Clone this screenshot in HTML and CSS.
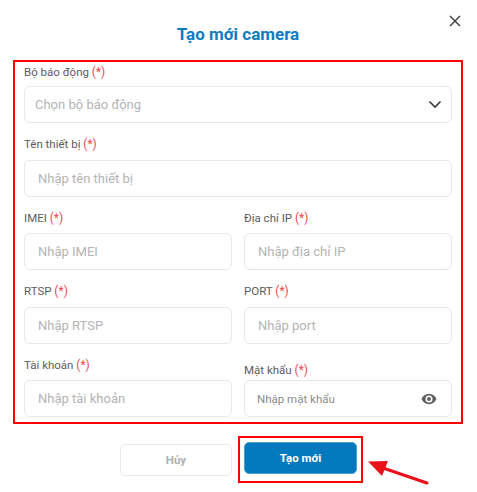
FILE: index.html
```html
<!DOCTYPE html>
<html lang="vi">
<head>
<meta charset="utf-8">
<title>Tạo mới camera</title>
<link rel="stylesheet" href="styles.css">
</head>
<body>
<div class="modal">
  <header class="modal-head">
    <h1 class="modal-title">Tạo mới camera</h1>
    <button class="close-btn" type="button" aria-label="Đóng">
      <svg width="12" height="12" viewBox="0 0 12 12"><path d="M1 1l10 10M11 1L1 11" fill="none" stroke="#444" stroke-width="1.5"/></svg>
    </button>
  </header>

  <form class="form-box">
    <div class="field field-first">
      <label class="label">Bộ báo động <span class="req">(*)</span></label>
      <div class="control control-select">
        <span class="ph ph-select">Chọn bộ báo động</span>
        <svg width="14" height="9" viewBox="0 0 14 9"><path d="M1.5 1.5L7 7l5.500-5.500" fill="none" stroke="#3a3a3a" stroke-width="1.700"/></svg>
      </div>
    </div>
    <div class="field">
      <label class="label">Tên thiết bị <span class="req">(*)</span></label>
      <div class="control"><span class="ph">Nhập tên thiết bị</span></div>
    </div>
    <div class="row">
      <div class="field">
        <label class="label">IMEI <span class="req">(*)</span></label>
        <div class="control"><span class="ph">Nhập IMEI</span></div>
      </div>
      <div class="field">
        <label class="label">Địa chỉ IP <span class="req">(*)</span></label>
        <div class="control"><span class="ph">Nhập địa chỉ IP</span></div>
      </div>
    </div>
    <div class="row">
      <div class="field">
        <label class="label">RTSP <span class="req">(*)</span></label>
        <div class="control"><span class="ph">Nhập RTSP</span></div>
      </div>
      <div class="field">
        <label class="label">PORT <span class="req">(*)</span></label>
        <div class="control"><span class="ph">Nhập port</span></div>
      </div>
    </div>
    <div class="row">
      <div class="field">
        <label class="label">Tài khoản <span class="req">(*)</span></label>
        <div class="control"><span class="ph">Nhập tài khoản</span></div>
      </div>
      <div class="field field-low">
        <label class="label">Mật khẩu <span class="req">(*)</span></label>
        <div class="control control-pass">
          <span class="ph ph-small">Nhập mật khẩu</span>
          <svg width="16" height="12" viewBox="0 0 16 12"><path fill-rule="evenodd" fill="#616161" d="M8 .8C4.600.8 1.700 2.900.5 6c1.200 3.100 4.100 5.200 7.500 5.200s6.300-2.100 7.500-5.200C14.300 2.900 11.400.8 8 .8zm0 8.700A3.500 3.500 0 1 1 8 2.500a3.500 3.500 0 0 1 0 7zM8 4a2 2 0 1 0 0 4 2 2 0 0 0 0-4z"/></svg>
        </div>
      </div>
    </div>
  </form>

  <div class="actions">
    <button class="btn btn-cancel" type="button">Hủy</button>
    <div class="btn-mark">
      <button class="btn btn-primary" type="button">Tạo mới</button>
    </div>
  </div>
</div>

<!-- mui ten chu thich -->
<svg class="arrow" width="66" height="28" viewBox="0 0 66 28">
  <path d="M61 24L14 8" fill="none" stroke="#e8101a" stroke-width="3" stroke-linecap="round"/>
  <path d="M2 2.500L22 2l-6 15z" fill="#e8101a"/>
</svg>
</body>
</html>
```

FILE: styles.css
```css
* {
  box-sizing: border-box;
}
body {
  margin: 0;
  background: #fff;
  font-family: Roboto, "Liberation Sans", sans-serif;
  color: #555;
}
.modal {
  width: 477px;
  height: 492px;
  padding: 0 14px 0 13px;
}

.modal-head {
  position: relative;
  height: 60px;
  padding-top: 24px;
}
.modal-title {
  margin: 0;
  font-size: 17px;
  line-height: 20px;
  font-weight: 700;
  color: #0d7dbf;
  text-align: center;
}
.close-btn {
  position: absolute;
  top: 15px;
  right: 1px;
  width: 14px;
  height: 12px;
  padding: 0;
  border: 0;
  background: none;
  display: flex;
  align-items: center;
  justify-content: center;
}

/* khung do chu thich */
.form-box {
  width: 450px;
  height: 364px;
  padding: 3px 9px 0;
  border: 2px solid #f00;
}
.field {
  margin-top: 14px;
}
.field-first {
  margin-top: 0;
}
.row {
  display: grid;
  grid-template-columns: 208px 208px;
  column-gap: 12px;
  margin-top: 14px;
}
.row .field {
  margin-top: 0;
}
.label {
  display: block;
  height: 22.500px;
  font-size: 11.500px;
  line-height: 14px;
  color: #5c5c5c;
}
.req {
  font-size: 12px;
  color: #f0484d;
}
.field-first .label {
  height: 21px;
}
.field-low .label {
  padding-top: 5px;
}
.control {
  height: 37px;
  padding: 0 13px;
  display: flex;
  align-items: center;
  border: 1px solid #e8e8e8;
  border-radius: 6px;
  background: #fff;
}
.control-select,
.control-pass {
  justify-content: space-between;
}
.control-select {
  padding: 0 9px 0 10px;
}
.control-pass {
  padding: 0 14px 0 12px;
}
.ph {
  font-size: 13px;
  color: #b4b4b4;
}
.ph-small {
  font-size: 11.500px;
  color: #8c8c8c;
}

.actions {
  display: flex;
  align-items: center;
  margin-top: 12px;
  padding-left: 107px;
  column-gap: 6px;
}
.btn {
  height: 32px;
  border-radius: 5px;
  font-family: inherit;
  font-size: 11.500px;
  font-weight: 700;
}
.btn-cancel {
  width: 112px;
  background: #fff;
  border: 1px solid #ececec;
  color: #b0b0b0;
}
.btn-primary {
  width: 113px;
  background: #0479bd;
  border: 1px solid #4a9ccc;
  color: #fff;
  display: block;
}
.btn-mark {
  width: 125px;
  height: 47px;
  padding: 4px 4px;
  border: 2px solid #f00;
}
.arrow {
  position: absolute;
  left: 366px;
  top: 459px;
}
```
